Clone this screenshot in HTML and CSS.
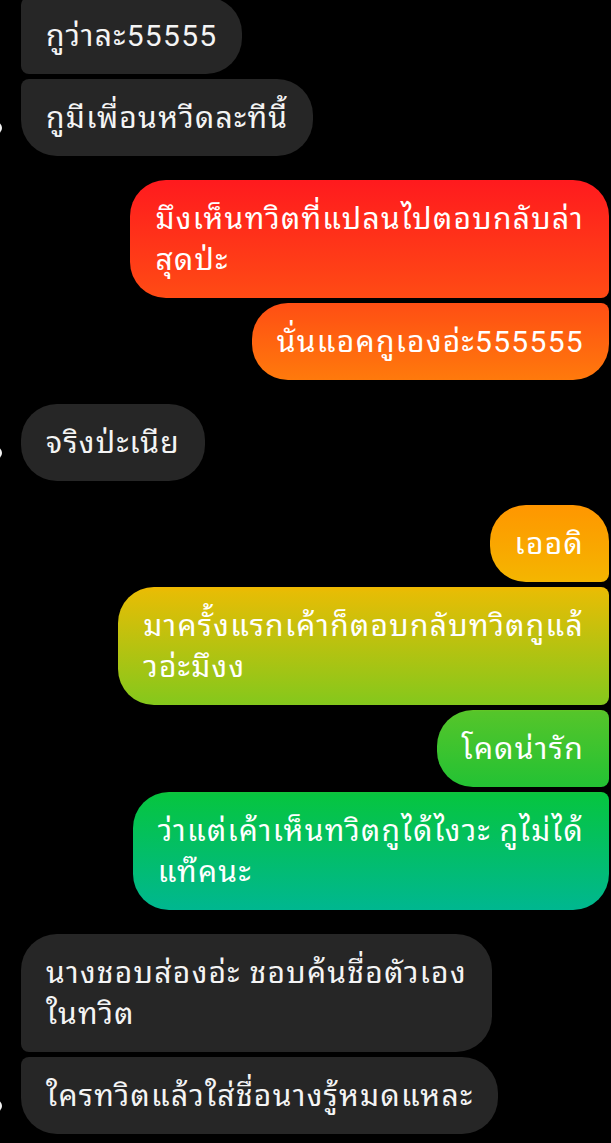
FILE: index.html
```html
<!DOCTYPE html>
<html lang="th">
<head>
    <meta charset="UTF-8">
    <meta name="viewport" content="width=device-width, initial-scale=1.0">
    <title>Chat</title>
    <link rel="stylesheet" href="styles.css">
</head>
<body>
    <div class="chat">
        <!-- them -->
        <div class="group">
            <div class="row in">
                <div class="bubble gray mid">กูว่าละ55555</div>
            </div>
            <div class="row in">
                <span class="avatar"></span>
                <div class="bubble gray last-in">กูมีเพื่อนหวีดละทีนี้</div>
            </div>
        </div>

        <!-- me -->
        <div class="group">
            <div class="row out">
                <div class="bubble grad first-out">มึงเห็นทวิตที่แปลนไปตอบกลับล่า<br>สุดป่ะ</div>
            </div>
            <div class="row out">
                <div class="bubble grad last-out">นั่นแอคกูเองอ่ะ555555</div>
            </div>
        </div>

        <div class="group">
            <div class="row in">
                <span class="avatar"></span>
                <div class="bubble gray single">จริงป่ะเนีย</div>
            </div>
        </div>

        <div class="group">
            <div class="row out">
                <div class="bubble grad first-out">เออดิ</div>
            </div>
            <div class="row out">
                <div class="bubble grad mid-out">มาครั้งแรกเค้าก็ตอบกลับทวิตกูแล้<br>วอ่ะมึงง</div>
            </div>
            <div class="row out">
                <div class="bubble grad mid-out">โคดน่ารัก</div>
            </div>
            <div class="row out">
                <div class="bubble grad last-out">ว่าแต่เค้าเห็นทวิตกูได้ไงวะ กูไม่ได้<br>แท๊คนะ</div>
            </div>
        </div>

        <div class="group">
            <div class="row in">
                <div class="bubble gray first-in">นางชอบส่องอ่ะ ชอบค้นชื่อตัวเอง<br>ในทวิต</div>
            </div>
            <div class="row in">
                <span class="avatar"></span>
                <div class="bubble gray last-in">ใครทวิตแล้วใส่ชื่อนางรู้หมดแหละ</div>
            </div>
        </div>
    </div>
</body>
</html>
```

FILE: styles.css
```css
body {
    margin: 0;
    background-color: #000;
    font-family: Roboto, "Noto Sans Thai Looped", "Noto Sans Thai UI", "Noto Sans Thai", sans-serif;
    overflow: hidden;
}
.chat {
    display: flex;
    flex-direction: column;
    gap: 24px;
    margin-top: -3px;
}
.group {
    display: flex;
    flex-direction: column;
    gap: 5px;
}
.row {
    display: flex;
    align-items: flex-end;
}
.row.in {
    padding-left: 21px;
}
.row.out {
    justify-content: flex-end;
    padding-right: 2px;
}
.avatar {
    width: 12px;
    height: 12px;
    margin-left: -31px;
    margin-right: 19px;
    margin-bottom: 22px;
    border-radius: 50%;
    background-color: #f2f2f2;
    flex-shrink: 0;
}
.bubble {
    font-size: 30px;
    line-height: 41px;
    padding: 18px 25px;
    color: #fff;
    white-space: nowrap;
    letter-spacing: 1.3px;
    border-radius: 36px;
}
.gray {
    background-color: #262626;
    color: #f4f4f4;
}
/* one gradient for the whole screen, each bubble shows its slice */
.grad {
    background-image: linear-gradient(180deg,
        #ff1020 0px,
        #ff1a1e 180px,
        #ff4c14 300px,
        #ff7a0c 380px,
        #ff9600 505px,
        #f4b700 585px,
        #e6bd05 592px,
        #84c81c 705px,
        #55c52a 712px,
        #22c234 788px,
        #06c540 795px,
        #00b790 910px,
        #00a8b0 1143px);
    background-attachment: fixed;
}
.mid {
    border-top-left-radius: 8px;
    border-bottom-left-radius: 8px;
}
.first-in {
    border-bottom-left-radius: 8px;
}
.last-in {
    border-top-left-radius: 8px;
}
.first-out {
    border-bottom-right-radius: 8px;
}
.mid-out {
    border-top-right-radius: 8px;
    border-bottom-right-radius: 8px;
}
.last-out {
    border-top-right-radius: 8px;
}
```
